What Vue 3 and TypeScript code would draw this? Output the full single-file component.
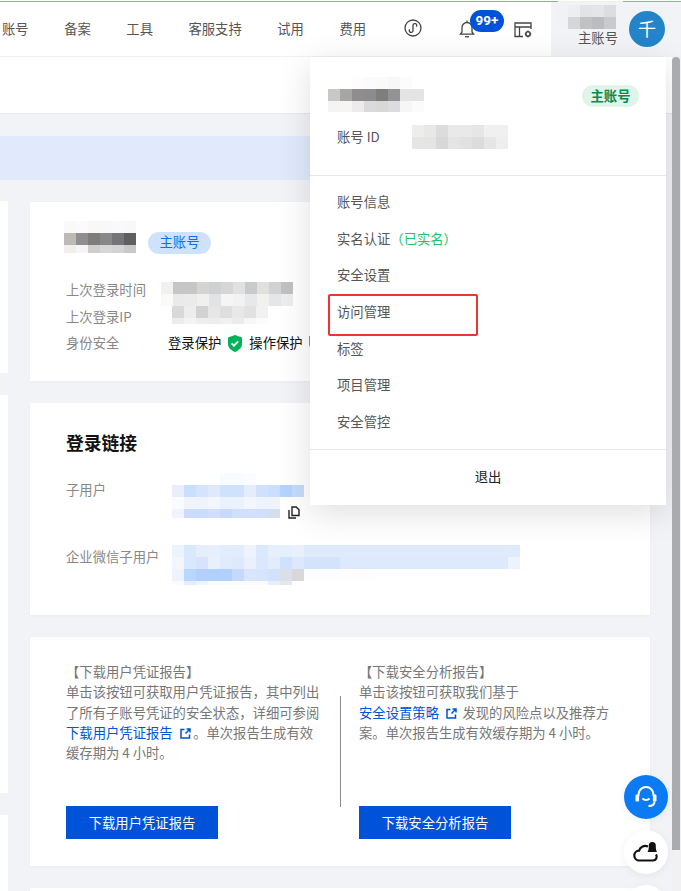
<script setup lang="ts">
import { h } from 'vue'

type MosaicProps = { rows: string[] }

// A row is "height: colour colour*repeat …"; "-" leaves a cell empty.
const Mosaic = (props: MosaicProps) =>
  h(
    'div',
    { class: 'mosaic' },
    props.rows.map((row) => {
      const [height, cells] = row.split(':')
      return h(
        'div',
        { class: 'mosaic-row', style: { height: `${height}px` } },
        cells
          .trim()
          .split(' ')
          .flatMap((cell) => {
            const [colour, count] = cell.split('*')
            return Array.from({ length: Number(count ?? 1) }, () =>
              h('i', { style: { background: colour === '-' ? 'transparent' : `#${colour}` } }),
            )
          }),
      )
    }),
  )

const navItems = ['账号', '备案', '工具', '客服支持', '试用', '费用']
const menuItems = ['账号信息', '实名认证', '安全设置', '访问管理', '标签', '项目管理', '安全管控']

const headerName = [
  '12: f1f2f5 eceef1 e2e3e5 e4e5e7 dcdde0',
  '12: f1f2f5 d5d6d8 c1c2c4 bbbcbe c9cacc',
]
const cardName = [
  '12: f9f9f9 fbfbfb f8f8f8 f8f8f8 f9f9f9 f8f8f8',
  '12: bdbab5 8f8f91 7f7d79 888889 757577 5f5f62',
  '8: f0efee f5f5f5 cfcecd d7d7d8 d4d3d3 c9c8c6',
]
const loginTime = [
  '12: f2f1f0 c6c6c6 c6c6c6 d4d4d2 cfd0d2 d6d6d6 e0e1e1 c9cacc e1e0de cfd3d6 c1c1c1',
  '12: fafafa eaeaea ebebeb f0f0f0 e3e3e3 f5f5f3 f0f2f4 e8e8e9 f1f1f0 e7e6e4 ecedee',
]
const loginIp = [
  '12: d9d9d9 ededed d2d2d2 e6e6e6 dedede e8e8e8 e1e1e1 f1f1f1',
  '6: ececec f3f3f3 eeeeee ededed f0f0f0 ebebeb f7f7f7 fbfbfb',
]
const subUser = [
  '12: - - - - f8fbff f8fbff fbfcff',
  '12: e8eefc c8e0fd d5e4fc dee9fc cfe1fc cfe1fc e3edfd cfe1fc c9dffd b4d3fd c6dcfc',
  '12: fafbfe eff4fd eff3fd f4f6fe ebf1fd ebf1fd f3f6fe eff3fd eff3fd',
  '9: eff4fe c9dcfc c9dcfc d0e0fc c6dbfc d0e0fc d0e0fc cfdffc d5deee',
]
const wecomUser = [
  '12: edf3fd d8e8fd e4eefd e8eefc e3ecfc e2ecfc eef3fd dce8fc e6effd e6effd e8f0fe dfeafc*18',
  '12: f3f6fe d8e8fd d8e3fb e8f0fe e0ebfd dfe9fc eaf0fd dae7fc e1edfd cfe1fc dbe8fd d3e3fc*3 dde9fd*14 edf3fe',
  '12: eff3fe b9d6fd b2d0fd b2d0fd b0d0fe c6d9fc d7e5fd d6e4fc d3e2fc d9e0ea d8d8d8 fdfdff*6',
  '4: fbfcff e4eefe eff5fe f7faff f9fbff f9fbff f9fbff f9fbff e8eef8 e8e8e8',
]
const menuName = [
  '12: - - fdfdfd fbfbfb fafafa f7f7f7 fcfcfc -',
  '12: c9c8c6 a8a6a4 8f8e8c 8c8c90 7e7e7e 939396 e4e4e4 e4e4e4',
  '11: f4f4f4 f5f5f5 ececec dadadc d8d8d6 dcdcde f6f6f6 fbfbfb',
]
const accountId = [
  '12: ededec e8e8e7 dcdcdc e9e9e9 e9e9e9 e6e6e6 f0f0f0 f0f0f0',
  '12: e5e5e5 e4e4e4 d8d8d8 e4e4e4 e1e1e1 dcdcdc e6e6e6 eeeeee',
]
</script>

<template>
  <div class="page">
    <div class="topline"></div>
    <header class="header">
      <nav class="nav">
        <span v-for="item in navItems" :key="item">{{ item }}</span>
      </nav>
      <div class="tools">
        <svg class="tool-app" width="18" height="18" viewBox="0 0 18 18" fill="none" stroke="#444" stroke-width="1.3">
          <circle cx="9" cy="9" r="8" />
          <path d="M5.6 10.4a1.9 1.9 0 1 0 3.4 1.4V6.2a1.9 1.9 0 1 1 3.4 1.4" />
        </svg>
        <div class="bell">
          <svg width="18" height="19" viewBox="0 0 18 19" fill="none" stroke="#444" stroke-width="1.3">
            <path d="M9 1.5V3M4 13V8.5a5 5 0 0 1 10 0V13l1.6 2.2H2.4z" />
            <path d="M7 17.7h4" />
          </svg>
          <span class="badge">99+</span>
        </div>
        <svg class="tool-console" width="18" height="16" viewBox="0 0 18 16" fill="none" stroke="#444" stroke-width="1.3">
          <path d="M17 7V1H1v13.5h8M1 5h16M5.5 5v9.5" />
          <circle cx="14" cy="12" r="2.2" stroke-width="1.6" />
          <path d="M14 8.6v1.2M14 14.2v1.2M10.8 12H12M16 12h1.2" />
        </svg>
      </div>
      <div class="user">
        <div class="user-text">
          <Mosaic :rows="headerName" />
          <span>主账号</span>
        </div>
        <div class="avatar">千</div>
      </div>
    </header>

    <div class="subheader"></div>
    <div class="banner"></div>

    <div class="body">
      <aside class="side">
        <div class="side-a"></div>
        <div class="side-b"></div>
        <div class="side-c"></div>
      </aside>

      <main class="content">
        <section class="card card-account">
          <div class="account-head">
            <Mosaic :rows="cardName" />
            <span class="tag-blue">主账号</span>
          </div>
          <div class="info">
            <span class="label">上次登录时间</span>
            <div class="info-time"><Mosaic :rows="loginTime" /></div>
            <span class="label">上次登录IP</span>
            <div class="info-ip"><Mosaic :rows="loginIp" /></div>
            <span class="label">身份安全</span>
            <div class="security">
              <span>登录保护</span>
              <svg width="16" height="17" viewBox="0 0 16 17">
                <path d="M8 0l7 2.5V9c0 4-3.500 6.500-7 8-3.500-1.500-7-4-7-8V2.500z" fill="#00b25a" />
                <path d="M4.600 8.300l2.400 2.400 4.200-4.300" fill="none" stroke="#fff" stroke-width="1.800" />
              </svg>
              <span>操作保护</span>
              <svg width="16" height="17" viewBox="0 0 16 17">
                <path d="M8 0l8 2.500V9c0 4-4 6.500-8 8-4-1.500-8-4-8-8V1z" fill="#e46a6a" />
              </svg>
            </div>
          </div>
        </section>

        <section class="card card-links">
          <h2>登录链接</h2>
          <div class="link-row link-sub">
            <span class="label">子用户</span>
            <div class="link-value">
              <Mosaic :rows="subUser" />
              <svg class="copy" width="12" height="13" viewBox="0 0 12 13" fill="none" stroke="#222" stroke-width="1.400">
                <path d="M4 1h4.200L11 3.800V9.500H4z" />
                <path d="M1 4v8h7" />
              </svg>
            </div>
          </div>
          <div class="link-row link-wecom">
            <span class="label">企业微信子用户</span>
            <div class="link-value"><Mosaic :rows="wecomUser" /></div>
          </div>
        </section>

        <section class="card card-reports">
          <div class="report report-user">
            <p>
              【下载用户凭证报告】<br />单击该按钮可获取用户凭证报告，其中列出<br />了所有子账号凭证的安全状态，详细可参阅<br /><a>下载用户凭证报告<svg class="ext" width="11" height="11" viewBox="0 0 11 11" fill="none" stroke="#0052d9" stroke-width="1.500"><path d="M4.500 1.500H1v8.500h8.500V6.500M6.500 1h3.500v3.500M10 1L5.500 5.500" /></svg></a>。单次报告生成有效<br />缓存期为 4 小时。
            </p>
            <button type="button">下载用户凭证报告</button>
          </div>
          <div class="report-divider"></div>
          <div class="report">
            <p>
              【下载安全分析报告】<br />单击该按钮可获取我们基于<br /><a>安全设置策略<svg class="ext" width="11" height="11" viewBox="0 0 11 11" fill="none" stroke="#0052d9" stroke-width="1.500"><path d="M4.500 1.500H1v8.500h8.500V6.500M6.500 1h3.500v3.500M10 1L5.500 5.500" /></svg></a> 发现的风险点以及推荐方<br />案。单次报告生成有效缓存期为 4 小时。
            </p>
            <button type="button">下载安全分析报告</button>
          </div>
        </section>

        <section class="card card-next"></section>
      </main>
    </div>

    <div class="dropdown">
      <div class="profile">
        <div class="profile-top">
          <Mosaic :rows="menuName" />
          <span class="tag-green">主账号</span>
        </div>
        <div class="profile-id">
          <span>账号 ID</span>
          <Mosaic :rows="accountId" />
        </div>
      </div>
      <ul class="menu">
        <li v-for="item in menuItems" :key="item">
          {{ item }}<em v-if="item === '实名认证'">（已实名）</em>
        </li>
      </ul>
      <div class="logout">退出</div>
      <div class="highlight"></div>
    </div>

    <div class="scroll-track"><div class="scroll-thumb"></div></div>

    <div class="floats">
      <button class="float float-blue" type="button" aria-label="客服">
        <svg width="26" height="26" viewBox="0 0 26 26" fill="none" stroke="#fff" stroke-width="2">
          <path d="M5.500 12V10.500a7.500 7.500 0 0 1 15 0V12" />
          <rect x="2.500" y="10.500" width="3.600" height="7" rx="1.200" fill="#fff" stroke="none" />
          <rect x="19.900" y="10.500" width="3.600" height="7" rx="1.200" fill="#fff" stroke="none" />
          <path d="M9.500 14.500c1.800 2 5.200 2 7 0" />
          <path d="M21.500 17.500c0 3-2.500 4.500-6 4.500" />
        </svg>
      </button>
      <button class="float float-white" type="button" aria-label="通知">
        <svg width="26" height="26" viewBox="0 0 26 26" fill="none" stroke="#111" stroke-width="2.200">
          <path d="M15 7.500a6.500 6.500 0 0 0-9 4.200A4.700 4.700 0 0 0 6.500 21.500H20a3.800 3.800 0 0 0 3-6" />
          <path d="M14.500 13h9.500c-1-1.500-1.200-3-1.200-6.500a3.500 3.500 0 0 0-7 0c0 3.500-.3 5-1.300 6.500z" fill="#111" stroke="none" />
        </svg>
      </button>
      <div class="float float-white"></div>
    </div>
  </div>
</template>

<style scoped>
.page {
  position: relative;
  width: 681px;
  height: 891px;
  overflow: hidden;
  background: #f1f3f7;
  font-family: "Noto Sans CJK SC", "Noto Sans", sans-serif;
  font-size: 13.33px;
  line-height: 20px;
  color: #555;
}
.topline {
  height: 2px;
  background: linear-gradient(90deg, #8fb28f 0 558px, #eef2ea 558px 623px, #8fb28f 623px);
  border-top: 1px solid #fff;
  box-sizing: border-box;
}
.header {
  display: flex;
  height: 54px;
  background: #fff;
  border-bottom: 1px solid #f1f1f3;
  box-sizing: content-box;
}
.nav {
  display: flex;
  align-items: center;
  gap: 35.5px;
  margin-left: 2px;
  width: 402px;
  white-space: nowrap;
  padding-bottom: 1px;
  box-sizing: border-box;
}
.tools {
  position: relative;
  display: flex;
  align-items: center;
  width: 147px;
  padding-bottom: 2px;
  box-sizing: border-box;
}
.bell {
  position: relative;
  display: flex;
  margin-left: 36px;
}
.badge {
  position: absolute;
  left: 12px;
  top: -9px;
  height: 22px;
  width: 34px;
  border-radius: 11px;
  background: #0052d9;
  color: #fff;
  font-family: Roboto, sans-serif;
  font-weight: 700;
  font-size: 13.5px;
  line-height: 21px;
  text-align: center;
}
.tool-console {
  margin: 4px 0 0 38px;
}
.user {
  display: flex;
  flex: 1;
  background: #f1f3f7;
  padding: 3px 14px 0 5px;
}
.user-text {
  display: flex;
  flex-direction: column;
  align-items: flex-end;
}
.user-text span {
  line-height: 18px;
  margin-right: -2px;
  color: #555;
}
.avatar {
  width: 36px;
  height: 36px;
  margin: 6px 0 0 13px;
  border-radius: 50%;
  background: #2484c9;
  color: #fff;
  font-size: 18px;
  line-height: 35px;
  text-align: center;
}
.subheader {
  height: 56px;
  background: #fff;
  border-bottom: 1px solid #e8e9ee;
}
.banner {
  width: 650px;
  height: 44px;
  margin-top: 22px;
  background: #e1eafc;
}
.body {
  display: flex;
  margin-top: 22px;
}
.side {
  width: 8px;
  display: flex;
  flex-direction: column;
  gap: 22px;
  margin-top: -1px;
}
.side-a { height: 172px; background: #fff; }
.side-b { height: 398px; background: #fff; }
.side-c { height: 100px; background: #fff; }
.content {
  width: 620px;
  margin-left: 22px;
  display: flex;
  flex-direction: column;
  gap: 22px;
}
.card {
  background: #fff;
  box-shadow: 0 1px 3px rgba(0, 0, 0, 0.03);
  box-sizing: border-box;
}
.label { color: #888; }
.card-account {
  height: 179px;
  padding: 19px 0 0 34px;
}
.account-head {
  display: flex;
  gap: 12px;
}
.tag-blue {
  height: 22px;
  margin-top: 11px;
  padding: 0 11.500px;
  border-radius: 11px;
  background: #cfe2fc;
  color: #0a6ff0;
  line-height: 20px;
}
.info {
  display: grid;
  grid-template-columns: 95px 1fr;
  grid-auto-rows: 26.5px;
  align-items: center;
  margin: 23px 0 0 2px;
}
.info-time { align-self: start; padding-top: 5px; }
.info-ip { align-self: start; padding: 2px 0 0 11px; }
.security {
  display: flex;
  align-items: center;
  gap: 6px;
  margin-left: 7px;
  color: #111;
  white-space: nowrap;
}
.card-links {
  height: 212px;
  padding: 29px 0 0 36px;
}
.card-links h2 {
  margin: 0;
  font-size: 17.8px;
  line-height: 20px;
  font-weight: 700;
  color: #111;
}
.link-row {
  display: grid;
  grid-template-columns: 106px 1fr;
}
.link-sub { margin-top: 21px; }
.link-sub .label { padding-top: 7px; }
.link-wecom { margin-top: 27px; }
.link-wecom .label { padding-top: 2px; }
.link-value { position: relative; }
.copy {
  position: absolute;
  left: 116px;
  top: 33px;
}
.card-reports {
  height: 229px;
  padding: 25px 0 27px 36px;
  display: flex;
}
.report {
  display: flex;
  flex-direction: column;
  justify-content: space-between;
  width: 270px;
}
.report-user { width: 274px; }
.report p {
  margin: 0;
  line-height: 20.25px;
  color: #777;
  white-space: nowrap;
}
.report a { color: #0052d9; }
.ext { margin: 0 2.500px -1px 7px; }
.report button {
  width: 152px;
  height: 33px;
  border: 0;
  padding: 0;
  background: #0052d9;
  color: #fff;
  font: inherit;
}
.report-divider {
  width: 1px;
  height: 111px;
  margin: 34px 18px 0 0;
  background: #8a8a8a;
}
.card-next { height: 40px; flex: none; }

.dropdown {
  position: absolute;
  left: 310px;
  top: 57px;
  width: 356px;
  height: 448px;
  background: #fff;
  box-shadow: 0 8px 32px rgba(0, 0, 0, 0.13);
}
.profile {
  height: 98px;
  padding: 20px 27px 0 18px;
  border-bottom: 1px solid #e8e9ee;
}
.profile-top {
  display: flex;
  justify-content: space-between;
}
.tag-green {
  height: 22px;
  margin-top: 8px;
  padding: 0 8.500px;
  border-radius: 11px;
  background: #dff5ea;
  color: #0a8a50;
  font-weight: 700;
  line-height: 21px;
}
.profile-id {
  display: grid;
  grid-template-columns: 75px 1fr;
  align-items: center;
  margin: 13px 0 0 9px;
}
.menu {
  list-style: none;
  margin: 0;
  padding: 8px 0 8px 27px;
  border-bottom: 1px solid #e8e9ee;
}
.menu li {
  height: 36.670px;
  line-height: 36.670px;
  color: #555;
}
.menu em {
  font-style: normal;
  color: #1bc46d;
}
.logout {
  height: 55px;
  line-height: 54px;
  text-align: center;
  color: #222;
}
.highlight {
  position: absolute;
  left: 18px;
  top: 237px;
  width: 150px;
  height: 42px;
  border: 2px solid #f2322f;
  border-radius: 2px;
  box-sizing: border-box;
}
.scroll-track {
  position: absolute;
  right: 0;
  top: 57px;
  bottom: 0;
  width: 9px;
  background: #f1f1f3;
}
.scroll-thumb {
  width: 8px;
  height: 793px;
  border-radius: 4px 4px 0 0;
  background: #a9abaf;
}
.floats {
  position: absolute;
  left: 624px;
  top: 775px;
  display: flex;
  flex-direction: column;
  gap: 11px;
}
.float {
  display: flex;
  align-items: center;
  justify-content: center;
  flex: none;
  width: 44px;
  height: 44px;
  padding: 0;
  border: 0;
  border-radius: 50%;
  box-shadow: 0 2px 10px rgba(0, 0, 0, 0.06);
}
.float-blue { background: #0b7bf5; }
.float-white { background: #fff; }
</style>

<style>
.mosaic {
  display: flex;
  flex-direction: column;
  flex: none;
}
.mosaic-row {
  display: flex;
}
.mosaic-row i {
  display: block;
  flex: none;
  width: 12px;
}
</style>
